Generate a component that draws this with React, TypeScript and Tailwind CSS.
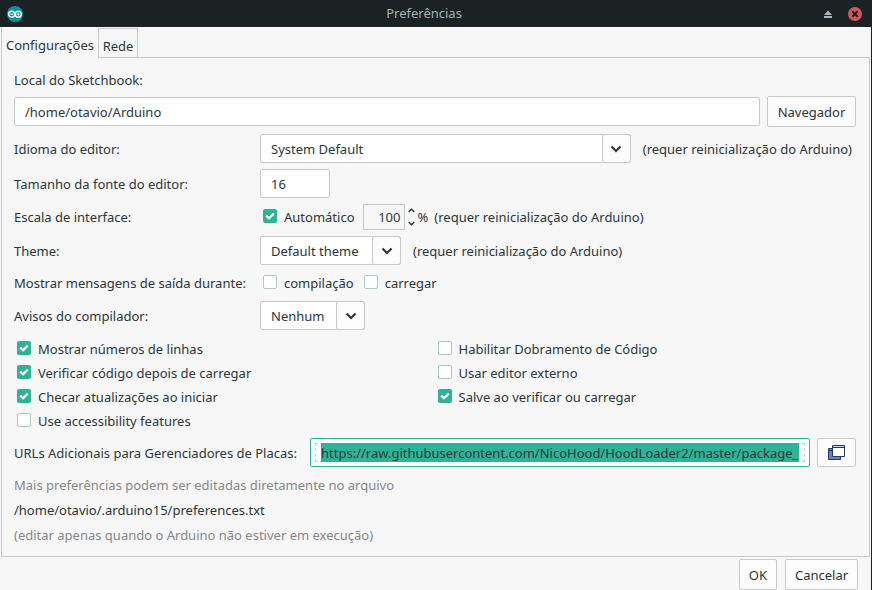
import { useState, type ReactNode } from "react";

const box = "rounded-[2px] border border-[#c8cac9]";
const buttonStyle = `${box} h-[31px] shrink-0 bg-[#fcfcfc] px-[9px]`;

function Check({
  label,
  checked = false,
  className = "",
}: {
  label: string;
  checked?: boolean;
  className?: string;
}) {
  const [on, setOn] = useState(checked);
  return (
    <label className={`flex h-6 items-center gap-[7px] ${className}`}>
      <span className="relative mb-[2px] flex">
        <input
          type="checkbox"
          checked={on}
          onChange={(e) => setOn(e.target.checked)}
          className="size-3.5 appearance-none rounded-[2px] border border-[#a6cbc3] bg-white checked:border-[#2fb398] checked:bg-[#2fb398]"
        />
        {on && (
          <svg viewBox="0 0 14 14" className="pointer-events-none absolute inset-0 size-3.5" aria-hidden="true">
            <path d="M3.2 6.6 6 9.2 10.8 4.6" fill="none" stroke="#fff" strokeWidth="2.2" />
          </svg>
        )}
      </span>
      {label}
    </label>
  );
}

function Combo({ id, options, className = "" }: { id: string; options: string[]; className?: string }) {
  return (
    <div className={`relative h-[29px] ${className}`}>
      <select id={id} className={`${box} h-full w-full appearance-none bg-white pr-[30px] pl-[10px] outline-none`}>
        {options.map((o) => (
          <option key={o}>{o}</option>
        ))}
      </select>
      <span className="pointer-events-none absolute inset-y-0 right-0 flex w-[29px] items-center justify-center rounded-[3px] border border-[#c8cac9] bg-[#fcfcfc]">
        <svg viewBox="0 0 12 8" className="h-2 w-3" aria-hidden="true">
          <path d="M1.5 1.5 6 6 10.5 1.5" fill="none" stroke="#2b3639" strokeWidth="2.2" />
        </svg>
      </span>
    </div>
  );
}

function Row({ label, htmlFor, children }: { label: string; htmlFor?: string; children: ReactNode }) {
  return (
    <div className="flex items-center">
      {htmlFor ? (
        <label htmlFor={htmlFor} className="w-[246px] shrink-0">
          {label}
        </label>
      ) : (
        <span className="w-[246px] shrink-0">{label}</span>
      )}
      {children}
    </div>
  );
}

const restart = "(requer reinicialização do Arduino)";

export default function App() {
  return (
    <div className="flex min-h-screen flex-col bg-[#f7f7f7] font-['Noto_Sans',sans-serif] text-[13px] leading-5 whitespace-nowrap text-[#2b3639]">
      <header className="flex h-[27px] items-center bg-[#1b2224] px-[7px] text-[#a3b1b3]">
        <div className="flex-1">
          <svg viewBox="0 0 16 16" className="size-4" aria-hidden="true">
            <circle cx="8" cy="8" r="8" fill="#00979c" />
            <g fill="none" stroke="#fff" strokeWidth="1.4">
              <circle cx="4.7" cy="8.2" r="3" />
              <circle cx="11.3" cy="8.2" r="3" />
              <path d="M3.3 8.2h2.8M9.9 8.2h2.8M11.3 6.8v2.8" strokeWidth="1" />
            </g>
          </svg>
        </div>
        <h1 className="mr-6 pb-[2px]">Preferências</h1>
        <div className="flex flex-1 items-center justify-end gap-4">
          <button aria-label="Restaurar">
            <svg viewBox="0 0 8 8" className="size-2" aria-hidden="true">
              <path d="M4 0.5 8 5H0zM0 6h8v2H0z" fill="#a9b7ba" />
            </svg>
          </button>
          <button aria-label="Fechar" className="mr-[3px]">
            <svg viewBox="0 0 14 14" className="size-3.5" aria-hidden="true">
              <circle cx="7" cy="7" r="7" fill="#d0575e" />
              <path d="m4.3 4.3 5.4 5.4M9.7 4.3 4.3 9.7" stroke="#1b2224" strokeWidth="2" />
            </svg>
          </button>
        </div>
      </header>

      <main className="flex flex-1 flex-col border-r border-[#1b2224] pr-px pl-px">
        <div role="tablist" className="flex h-[30px] items-end">
          <button role="tab" aria-selected="true" className="h-full w-[97px] border-l border-[#c8cac9] pt-[6px] pl-[4px] text-left leading-6">
            Configurações
          </button>
          <button role="tab" aria-selected="false" className="h-[29px] w-10 border-x border-t border-[#c8cac9] px-[3px] pt-[5px]">
            Rede
          </button>
        </div>
        <section className="flex flex-col">
          <div className="flex">
            <span className="w-[97px] border-l border-[#c8cac9]" />
            <span className="h-px flex-1 bg-[#c8cac9]" />
          </div>
          <div className="flex flex-col border-x border-b border-[#c8cac9] pt-[10px] pr-[13px] pb-2 pl-3">
            <label htmlFor="sketchbook" className="leading-6">
              Local do Sketchbook:
            </label>
            <div className="mt-1 flex items-center gap-[7px]">
              <input
                id="sketchbook"
                defaultValue="/home/otavio/Arduino"
                className={`${box} h-[29px] min-w-0 flex-1 bg-white px-[10px] outline-none`}
              />
              <button className={`${buttonStyle} w-[89px]`}>Navegador</button>
            </div>

            <div className="mt-[7px] flex flex-col gap-[6px]">
              <Row label="Idioma do editor:" htmlFor="idioma">
                <Combo id="idioma" options={["System Default"]} className="flex-1" />
                <span className="mr-1 ml-3">{restart}</span>
              </Row>
              <Row label="Tamanho da fonte do editor:" htmlFor="fonte">
                <input id="fonte" defaultValue="16" className={`${box} h-[29px] w-[70px] bg-white px-[10px] outline-none`} />
              </Row>
              <Row label="Escala de interface:">
                <Check label="Automático" checked className="ml-[3px]" />
                <input
                  aria-label="Escala"
                  defaultValue="100"
                  readOnly
                  className="ml-2 h-[26px] w-[42px] border border-[#c8cac9] bg-transparent pr-[3px] text-right outline-none"
                />
                <span className="mx-[3px] flex flex-col gap-2">
                  <button aria-label="Aumentar">
                    <svg viewBox="0 0 7 5" className="h-[5px] w-[7px]" aria-hidden="true">
                      <path d="M.7 4 3.5 1.2 6.3 4" fill="none" stroke="#2b3639" strokeWidth="1.4" />
                    </svg>
                  </button>
                  <button aria-label="Diminuir">
                    <svg viewBox="0 0 7 5" className="h-[5px] w-[7px]" aria-hidden="true">
                      <path d="M.7 1 3.5 3.8 6.3 1" fill="none" stroke="#2b3639" strokeWidth="1.4" />
                    </svg>
                  </button>
                </span>
                <span>%</span>
                <span className="ml-[6px]">{restart}</span>
              </Row>
              <Row label="Theme:" htmlFor="tema">
                <Combo id="tema" options={["Default theme"]} className="w-[141px]" />
                <span className="ml-3">{restart}</span>
              </Row>
              <Row label="Mostrar mensagens de saída durante:">
                <Check label="compilação" className="ml-[3px]" />
                <Check label="carregar" className="ml-[10px]" />
              </Row>
              <Row label="Avisos do compilador:" htmlFor="avisos">
                <Combo id="avisos" options={["Nenhum"]} className="w-[105px]" />
              </Row>
            </div>

            <div className="mt-[7px] grid grid-cols-2 gap-x-[2px] pl-[3px]">
              <Check label="Mostrar números de linhas" checked />
              <Check label="Habilitar Dobramento de Código" />
              <Check label="Verificar código depois de carregar" checked />
              <Check label="Usar editor externo" />
              <Check label="Checar atualizações ao iniciar" checked />
              <Check label="Salve ao verificar ou carregar" checked />
              <Check label="Use accessibility features" />
            </div>

            <div className="mt-[5px] flex items-center">
              <label htmlFor="urls">URLs Adicionais para Gerenciadores de Placas:</label>
              <div className="ml-[13px] flex h-[29px] min-w-0 flex-1 items-center rounded-[2px] border border-[#2fb398] bg-white px-1">
                <div className="flex h-[19px] min-w-0 flex-1 border border-dashed border-[#c8cac9] px-[5px]">
                  <input
                    id="urls"
                    defaultValue="https://raw.githubusercontent.com/NicoHood/HoodLoader2/master/package_NicoHood_HoodLoader2_index.json"
                    className="-my-px h-[19px] min-w-0 flex-1 bg-[#2fb398] outline-none"
                  />
                </div>
              </div>
              <button aria-label="Editar URLs" className={`${box} ml-[7px] flex h-[29px] w-[39px] items-center justify-center bg-[#fcfcfc]`}>
                <svg viewBox="0 0 17 15" className="h-[15px] w-[17px]" aria-hidden="true">
                  <path d="M.5 3.5h12v11H.5z" fill="#6d83b0" stroke="#22396e" />
                  <path d="M.5 5.5h4" stroke="#22396e" />
                  <path d="M4.5.5h12v11h-12z" fill="#fcfcfc" stroke="#22396e" />
                  <path d="M5 1.5h11" stroke="#c5d0e6" />
                  <path d="M4.5 2.5h12" stroke="#22396e" />
                </svg>
              </button>
            </div>

            <p className="mt-[6px] leading-[25px] text-[#868888]">Mais preferências podem ser editadas diretamente no arquivo</p>
            <p className="leading-[25px]">/home/otavio/.arduino15/preferences.txt</p>
            <p className="leading-[25px] text-[#868888]">(editar apenas quando o Arduino não estiver em execução)</p>
          </div>
        </section>
        <footer className="mt-[2px] flex justify-end gap-2 pr-3">
          <button className={buttonStyle}>OK</button>
          <button className={`${buttonStyle} w-[73px]`}>Cancelar</button>
        </footer>
      </main>
    </div>
  );
}
